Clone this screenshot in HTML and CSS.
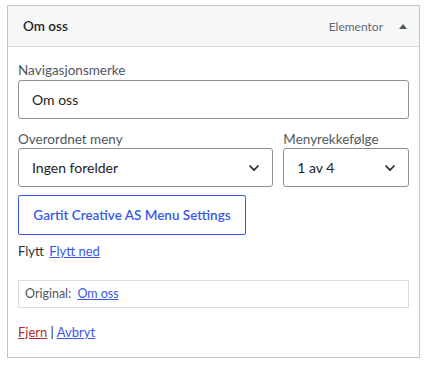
FILE: index.html
```html
<!DOCTYPE html>
<html lang="nb">
<head>
  <meta charset="UTF-8">
  <meta name="viewport" content="width=device-width, initial-scale=1.0">
  <title>Om oss</title>
  <link rel="stylesheet" href="styles.css">
</head>
<body>
  <div class="menu-item">
    <div class="item-bar">
      <span class="item-title">Om oss</span>
      <span class="item-controls">
        <span class="item-type">Elementor</span>
        <svg class="toggle" width="8" height="5" viewBox="0 0 8 5"><path d="M0 5 L4 0 L8 5 Z" fill="#50575e"/></svg>
      </span>
    </div>
    <div class="item-settings">
      <label class="field-label">Navigasjonsmerke</label>
      <div class="text-input">Om oss</div>

      <div class="field-row">
        <div class="field parent">
          <label class="field-label">Overordnet meny</label>
          <div class="select">
            <span>Ingen forelder</span>
            <svg width="12" height="8" viewBox="0 0 12 8"><path d="M1.5 1.5 L6 6 L10.5 1.5" fill="none" stroke="#1d2327" stroke-width="1.6"/></svg>
          </div>
        </div>
        <div class="field order">
          <label class="field-label">Menyrekkefølge</label>
          <div class="select">
            <span>1 av 4</span>
            <svg width="12" height="8" viewBox="0 0 12 8"><path d="M1.5 1.5 L6 6 L10.5 1.5" fill="none" stroke="#1d2327" stroke-width="1.6"/></svg>
          </div>
        </div>
      </div>

      <button class="settings-button">Gartit Creative AS Menu Settings</button>

      <div class="move-row">Flytt <a href="#">Flytt ned</a></div>

      <div class="original">Original: <a href="#">Om oss</a></div>

      <div class="actions"><a href="#" class="delete">Fjern</a> | <a href="#">Avbryt</a></div>
    </div>
  </div>
</body>
</html>
```

FILE: styles.css
```css
body {
  margin: 0;
  font-family: Lato, "Segoe UI", sans-serif;
  font-size: 13px;
  color: #1d2327;
  background: #fff;
}
a {
  color: #3858e9;
}
.menu-item {
  width: 411px;
  margin: 5px 0 0 7px;
  border: 1px solid #c3c4c7;
}
.item-bar {
  display: flex;
  justify-content: space-between;
  align-items: center;
  height: 40px;
  padding: 0 12px 0 15px;
  background: #f6f7f7;
  border-bottom: 1px solid #dcdcde;
}
.item-title {
  font-size: 13.5px;
  font-weight: 600;
}
.item-controls {
  display: flex;
  align-items: center;
  gap: 16px;
  color: #646970;
  font-size: 12px;
}
.item-settings {
  padding: 14px 10px 16px 10px;
}
.field-label {
  display: block;
  line-height: 18px;
  color: #50575e;
  font-size: 13.5px;
}
.text-input {
  box-sizing: border-box;
  height: 39px;
  margin-top: 1px;
  padding: 0 13px;
  line-height: 37px;
  font-size: 14px;
  border: 1px solid #8c8f94;
  border-radius: 3px;
}
.field-row {
  display: flex;
  gap: 10px;
  margin-top: 11px;
}
.parent {
  width: 256px;
}
.order {
  width: 126px;
}
.select {
  box-sizing: border-box;
  display: flex;
  justify-content: space-between;
  align-items: center;
  height: 39px;
  padding: 0 12px 0 13px;
  font-size: 14px;
  border: 1px solid #8c8f94;
  border-radius: 3px;
}
.settings-button {
  display: block;
  width: 228px;
  height: 40px;
  margin-top: 8px;
  padding: 0;
  font-family: inherit;
  font-size: 13.5px;
  font-weight: 600;
  color: #3858e9;
  background: #fff;
  border: 1px solid #3858e9;
  border-radius: 2px;
}
.move-row {
  margin-top: 7px;
  line-height: 18px;
  font-size: 13px;
  color: #2c3338;
}
.move-row a {
  margin-left: 2px;
}
.original {
  margin-top: 20px;
  height: 28px;
  box-sizing: border-box;
  padding: 0 6px;
  line-height: 26px;
  font-size: 12.5px;
  color: #50575e;
  border: 1px solid #dcdcde;
}
.original a {
  margin-left: 3px;
}
.actions {
  margin-top: 15px;
  line-height: 18px;
  font-size: 13px;
}
.actions .delete {
  color: #b32d2e;
}
```
